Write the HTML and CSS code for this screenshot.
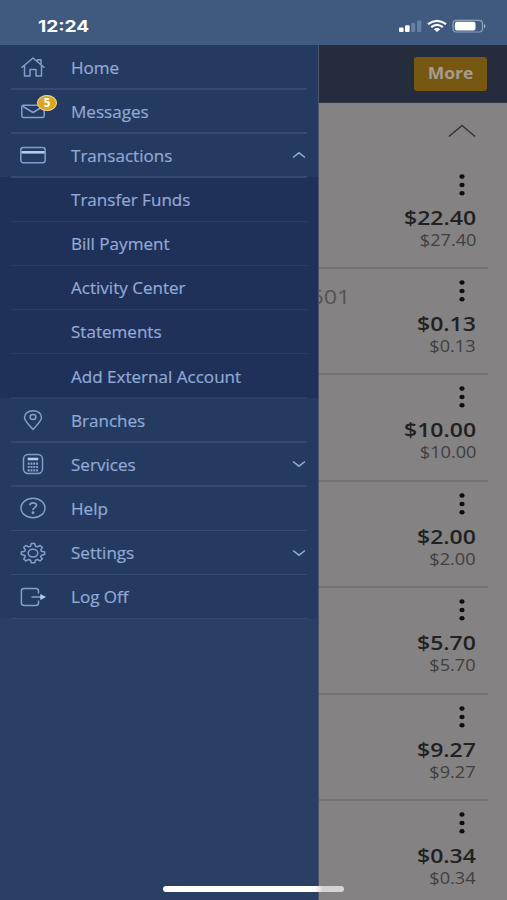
FILE: index.html
```html
<!DOCTYPE html>
<html lang="en">
<head>
<meta charset="utf-8">
<title>Accounts</title>
<link rel="stylesheet" href="styles.css">
</head>
<body>
<div class="phone">
  <header class="status">
    <span class="clock">12:24</span>
    <svg class="signals" width="90" height="16" viewBox="0 0 90 16">
      <g fill="#fff"><rect x="1" y="8.500" width="4.600" height="4.500" rx="1"/><rect x="7" y="6.300" width="4.600" height="6.700" rx="1"/></g>
      <g fill="#6480a6"><rect x="13.200" y="4" width="4" height="9" rx="1"/><rect x="19" y="1.500" width="4.400" height="11.500" rx="1"/></g>
      <g fill="none" stroke="#fff" stroke-width="2.200"><path d="M30 5.200Q39 -1.600 48 5.200"/><path d="M33.200 8.200Q39 3.700 44.800 8.200"/></g>
      <path d="M35.800 10.200Q39 7.900 42.200 10.200L39 13Z" fill="#fff"/>
      <rect x="55" y="1.400" width="29.500" height="11.600" rx="3.500" fill="none" stroke="#8fa3bf" stroke-width="1.200"/>
      <rect x="56.800" y="2.800" width="20.700" height="8.800" rx="2" fill="#fff"/>
      <path d="M86 5q2.500 2.200 0 4.400z" fill="#b4c1d4"/>
    </svg>
  </header>
  <main class="page">
    <div class="toolbar"><button class="more"><span>More</span></button></div>
    <div class="group"><svg width="28" height="14" viewBox="0 0 28 14"><path d="M1 12.500L14 1.500L27 12.500"/></svg></div>
    <section class="accounts">
      <article class="account"><svg class="dots" width="6" height="22" viewBox="0 0 6 22"><ellipse cx="3" cy="2.500" rx="2.600" ry="2.200"/><ellipse cx="3" cy="11" rx="2.600" ry="2.200"/><ellipse cx="3" cy="19.300" rx="2.600" ry="2.200"/></svg><b>$22.40</b><span class="sub">$27.40</span></article>
      <article class="account"><span class="number">601</span><svg class="dots" width="6" height="22" viewBox="0 0 6 22"><ellipse cx="3" cy="2.500" rx="2.600" ry="2.200"/><ellipse cx="3" cy="11" rx="2.600" ry="2.200"/><ellipse cx="3" cy="19.300" rx="2.600" ry="2.200"/></svg><b>$0.13</b><span class="sub">$0.13</span></article>
      <article class="account"><svg class="dots" width="6" height="22" viewBox="0 0 6 22"><ellipse cx="3" cy="2.500" rx="2.600" ry="2.200"/><ellipse cx="3" cy="11" rx="2.600" ry="2.200"/><ellipse cx="3" cy="19.300" rx="2.600" ry="2.200"/></svg><b>$10.00</b><span class="sub">$10.00</span></article>
      <article class="account"><svg class="dots" width="6" height="22" viewBox="0 0 6 22"><ellipse cx="3" cy="2.500" rx="2.600" ry="2.200"/><ellipse cx="3" cy="11" rx="2.600" ry="2.200"/><ellipse cx="3" cy="19.300" rx="2.600" ry="2.200"/></svg><b>$2.00</b><span class="sub">$2.00</span></article>
      <article class="account"><svg class="dots" width="6" height="22" viewBox="0 0 6 22"><ellipse cx="3" cy="2.500" rx="2.600" ry="2.200"/><ellipse cx="3" cy="11" rx="2.600" ry="2.200"/><ellipse cx="3" cy="19.300" rx="2.600" ry="2.200"/></svg><b>$5.70</b><span class="sub">$5.70</span></article>
      <article class="account"><svg class="dots" width="6" height="22" viewBox="0 0 6 22"><ellipse cx="3" cy="2.500" rx="2.600" ry="2.200"/><ellipse cx="3" cy="11" rx="2.600" ry="2.200"/><ellipse cx="3" cy="19.300" rx="2.600" ry="2.200"/></svg><b>$9.27</b><span class="sub">$9.27</span></article>
      <article class="account"><svg class="dots" width="6" height="22" viewBox="0 0 6 22"><ellipse cx="3" cy="2.500" rx="2.600" ry="2.200"/><ellipse cx="3" cy="11" rx="2.600" ry="2.200"/><ellipse cx="3" cy="19.300" rx="2.600" ry="2.200"/></svg><b>$0.34</b><span class="sub">$0.34</span></article>
    </section>
  </main>
  <nav class="drawer">
    <a class="item"><svg class="icon" viewBox="0 0 28 24"><path d="M2.500 12.800L14 3L25.500 12.800M5.500 10.800V21H11V14.500H17V21H22.500V10.800M18.500 6.500V4.800H22V9.500"/></svg><span>Home</span></a>
    <a class="item"><svg class="icon" viewBox="0 0 28 24"><rect x="2.800" y="6.200" width="22.400" height="12.300" rx="1.500"/><path d="M4 7.500L14 13.500L24 7.500"/></svg><em class="badge">5</em><span>Messages</span></a>
    <a class="item"><svg class="icon" viewBox="0 0 28 24"><rect x="1.800" y="4.600" width="24.400" height="15.200" rx="2.500"/><path class="strong" d="M2.500 9.300H25.500"/></svg><span>Transactions</span><svg class="caret" viewBox="0 0 14 8"><path d="M1 6.500L7 1.800L13 6.500"/></svg></a>
    <div class="submenu">
      <a class="item"><span>Transfer Funds</span></a>
      <a class="item"><span>Bill Payment</span></a>
      <a class="item"><span>Activity Center</span></a>
      <a class="item"><span>Statements</span></a>
      <a class="item"><span>Add External Account</span></a>
    </div>
    <a class="item"><svg class="icon" viewBox="0 0 28 24"><path d="M14 21.500C11.500 18 5.500 13.500 5.500 9.500C5.500 5.500 9 2.700 14 2.700S22.500 5.500 22.500 9.500C22.500 13.500 16.500 18 14 21.500Z"/><ellipse cx="14" cy="9" rx="2.900" ry="2.500"/></svg><span>Branches</span></a>
    <a class="item"><svg class="icon" viewBox="0 0 28 24"><rect x="4.500" y="2.500" width="19" height="19" rx="4.500"/><path class="strong" d="M8.700 7H19.300"/><path d="M8.700 11.700H19.300M8.700 15H19.300M8.700 18.300H19.300" stroke-width="2.200" stroke-dasharray="2 .8"/></svg><span>Services</span><svg class="caret" viewBox="0 0 14 8"><path d="M1 1.500L7 6.200L13 1.500"/></svg></a>
    <a class="item"><svg class="icon" viewBox="0 0 28 24"><ellipse cx="14" cy="12" rx="12" ry="9.800"/><path d="M10.800 9.300C11 6 17.500 6 17.500 9.200C17.500 11.300 14 11.500 14 14" stroke-width="1.800"/><circle cx="14" cy="16.700" r=".7"/></svg><span>Help</span></a>
    <a class="item"><svg class="icon" viewBox="0 0 28 24"><path d="M12.3 2.500H15.700L16.500 5.200L18.400 5.900L21.100 4.500L23.300 6.400L21.700 8.800L22.500 10.300L25.700 10.900V13.500L22.500 14.200L21.700 15.700L23.300 18L21.100 19.900L18.400 18.500L16.500 19.200L15.700 21.700H12.300L11.500 19.200L9.600 18.500L6.900 19.900L4.700 18L6.300 15.700L5.500 14.200L2.300 13.500V10.900L5.500 10.300L6.300 8.800L4.700 6.400L6.900 4.500L9.600 5.900L11.500 5.200Z"/><ellipse cx="14" cy="12.100" rx="4.800" ry="3.900"/></svg><span>Settings</span><svg class="caret" viewBox="0 0 14 8"><path d="M1 1.500L7 6.200L13 1.500"/></svg></a>
    <a class="item"><svg class="icon" viewBox="0 0 28 24"><path d="M19.500 8.500V6Q19.500 3.500 16.500 3.500H5.200Q2.400 3.500 2.400 6V18Q2.400 20.500 5.200 20.500H16.500Q19.500 20.500 19.500 18V15.500M12.500 12H22.500"/><path d="M21.300 8.900L27 12L21.300 15.100Z" class="solid"/></svg><span>Log Off</span></a>
  </nav>
  <div class="home-bar"></div>
</div>
</body>
</html>
```

FILE: styles.css
```css
* { box-sizing: border-box; }
body { margin: 0; font-family: "Open Sans", "Noto Sans", sans-serif; }
.phone { position: relative; width: 507px; height: 900px; overflow: hidden; background: #848282; }
.status { display: flex; height: 45px; justify-content: space-between; align-items: flex-start; padding: 19px 19px 0 38px; background: #3f597f; }
.clock { color: #fff; font: 700 16px/14px Inter, sans-serif; transform: scaleX(1.19); transform-origin: left; }
.signals { flex: none; }
.toolbar { display: flex; justify-content: flex-end; height: 58px; padding: 12px 20px 0 0; background: #252d3d; border-bottom: 1px solid #303746; }
.more { width: 73px; height: 34px; padding: 0 0 3px; border: 0; border-radius: 3px; background: #765812; color: #a49c91; font: 700 15.500px "Open Sans", sans-serif; }
.more span { display: block; transform: scaleX(1.13); }
.group { display: flex; justify-content: flex-end; height: 59px; padding: 21px 31px 0 0; }
.group path { fill: none; stroke: #353435; stroke-width: 1.500; }
.accounts { padding-right: 19px; }
.account { position: relative; display: flex; flex-direction: column; align-items: flex-end; height: 106.400px; padding: 11px 12px 0 0; border-bottom: 2px solid #747272; }
.dots { flex: none; margin-right: 11.500px; fill: #0e0d0e; }
.account b { font-size: 19.500px; line-height: 24px; font-weight: 600; margin-top: 10px; color: #222122; transform: scaleX(1.18); transform-origin: right; }
.sub { font-size: 15.500px; line-height: 20px; color: #403f40; transform: scaleX(1.17); transform-origin: right; }
.number { position: absolute; right: 138px; top: 15px; font-size: 19.500px; line-height: 26px; color: #555354; transform: scaleX(1.2); transform-origin: right; }
.account:first-child { height: 107px; padding-top: 11.500px; }
.drawer { position: absolute; left: 0; top: 45px; width: 319px; height: 855px; background: linear-gradient(#253a60 573px, #293f64 574px); border-right: 1px solid #4c5568; }
.item { position: relative; display: flex; align-items: center; height: 44.150px; margin: 0 11px; color: #91a9d6; font-size: 15.500px; line-height: 20px; }
.item::after { content: ""; position: absolute; inset: auto 0 -0.500px; height: 1.500px; background: #344a70; }
.item span { flex: 1; padding-left: 25px; transform-origin: 25px 50%; transform: scaleX(1.1); margin-left: 0; margin-top: 1px; -webkit-text-stroke: .2px currentColor; }
.icon { flex: none; width: 28px; height: 24px; margin-left: 8px; margin-right: -1px; fill: none; stroke: #849dcc; stroke-width: 1.500; stroke-linejoin: round; }
.icon .strong { stroke: #b2cbf2; stroke-width: 2.600; }
.icon .solid { fill: #b2cbf2; stroke: none; }
.caret { width: 14px; height: 8px; margin-right: 1px; fill: none; stroke: #91a9d6; stroke-width: 1.500; }
.submenu { background: #1f3158; }
.submenu .item::after { background: #2a3e62; }
.submenu .item { padding-left: 35px; }
.badge { position: absolute; left: 26px; top: 6px; width: 20px; height: 16px; border: 1.500px solid #ead9a0; border-radius: 50%; background: #dca51e; color: #fff; text-align: center; font-style: normal; font-weight: 700; font-size: 11.500px; line-height: 13px; }
.home-bar { position: absolute; left: 163px; top: 886px; width: 181px; height: 6px; border-radius: 3px; background: linear-gradient(90deg, #fff 84%, #d4d4d4 88%); }
```
